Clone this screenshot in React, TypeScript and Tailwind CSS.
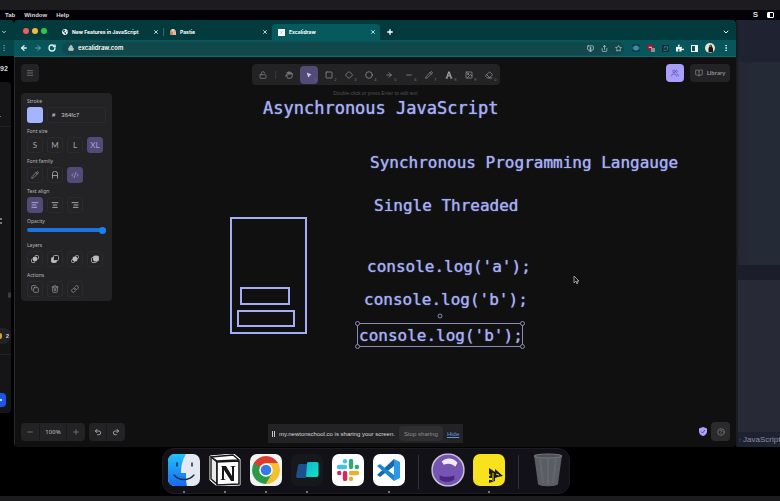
import React from "react";
import {
  AlignCenter, AlignLeft, AlignRight, ArrowLeft, ArrowRight, BookOpen, ChevronDown, ChevronRight, Circle, CodeXml,
  Copy, Diamond, EllipsisVertical, Eraser, Hand, HelpCircle, Image, Link, Lock, LockOpen, Menu, Minus,
  MonitorDown, MousePointer2, Pencil, Plus, Redo2, RotateCw, Share, Square, Star, Trash2, Undo2, Users, X,
} from "lucide-react";
import { FaFont, FaGlobeAmericas, FaPuzzlePiece } from "react-icons/fa";

type IconType = React.ComponentType<{ className?: string; strokeWidth?: number }>;

const sans = "font-['Liberation_Sans',Arial,sans-serif]";

function Tab({ label, icon, active, divider }: { label: string; icon: React.ReactNode; active?: boolean; divider?: boolean }) {
  return (
    <div
      className={
        "flex h-4 max-w-[108px] flex-1 items-center gap-1 pl-1.5 pr-1 text-white " +
        (active ? "rounded-t bg-[#06595d]" : "")
      }
    >
      {icon}
      <span className="flex-1 whitespace-nowrap font-['Inter',sans-serif] text-[5px] font-bold leading-[8px]">{label}</span>
      <button aria-label={"Close " + label}><X className="size-1.5" strokeWidth={3} /></button>
      {divider && <span className="-mr-1 h-2 w-px bg-[#3c6668]" />}
    </div>
  );
}

function TabStrip() {
  return (
    <div className="flex h-5 items-end bg-[#023a3d]">
      <div className="mr-[9px] flex h-[18px] items-center gap-[3px] pl-[9px]">
        <span className="size-1.5 rounded-full bg-[#f25d55]" />
        <span className="size-1.5 rounded-full bg-[#f6b93d]" />
        <span className="size-1.5 rounded-full bg-[#30c748]" />
      </div>
      <Tab label="New Features in JavaScript" icon={<FaGlobeAmericas className="size-1.5" />} divider />
      <Tab
        label="Pastie"
        icon={
          <svg viewBox="0 0 12 12" className="size-1.5">
            <rect x="0" y="2" width="12" height="10" rx="2" fill="#c98c5c" />
            <rect x="3" y="0" width="6" height="5" fill="#e9d9c6" />
            <rect x="6" y="5" width="6" height="7" fill="#e8b7a4" />
          </svg>
        }
      />
      <Tab
        active
        label="Excalidraw"
        icon={
          <svg viewBox="0 0 12 12" className="size-[7px]">
            <rect width="12" height="12" fill="#fff" />
            <path d="M4 9 8 3M4 3l4 6" stroke="#b9b2c9" strokeWidth="1.2" />
          </svg>
        }
      />
      <button aria-label="New tab" className="mb-1 ml-1.5 text-white"><Plus className="size-2" strokeWidth={4} /></button>
      <button aria-label="Search tabs" className="mb-1 ml-auto mr-1.5 text-white"><ChevronDown className="size-2" strokeWidth={3} /></button>
    </div>
  );
}

function AddressBar() {
  return (
    <div className="flex h-[17px] items-center border-b border-[#0d6a6e] bg-[#06565b] px-1.5 text-[#dcebeb]">
      <div className="flex items-center gap-1.5">
        <button aria-label="Back"><ArrowLeft className="size-2" strokeWidth={4} /></button>
        <button aria-label="Forward" className="text-[#6fa0a2]"><ArrowRight className="size-2" strokeWidth={3} /></button>
        <button aria-label="Reload"><RotateCw className="size-2" strokeWidth={4} /></button>
      </div>
      <div className="ml-1.5 flex h-[13px] flex-1 items-center gap-1 rounded-full bg-[#11484b] pl-1.5 pr-0.5">
        <Lock className="size-1.5 fill-current text-[#b5c6c7]" strokeWidth={3} />
        <input
          aria-label="Address"
          defaultValue="excalidraw.com"
          className="min-w-0 flex-1 bg-transparent font-['Inter',sans-serif] text-[6px] font-semibold leading-[8px] text-white outline-none"
        />
        <div className="flex gap-[7px]">
          <button aria-label="Install"><MonitorDown className="size-[7px]" strokeWidth={2} /></button>
          <button aria-label="Share"><Share className="size-[7px]" strokeWidth={2} /></button>
          <button aria-label="Bookmark"><Star className="size-[7px]" strokeWidth={2} /></button>
        </div>
      </div>
      <div className="ml-2 flex items-center gap-[7px]">
        <svg viewBox="0 0 16 16" className="size-2">
          <rect width="16" height="16" rx="3" fill="#173b47" />
          <ellipse cx="8" cy="8" rx="7" ry="3" fill="none" stroke="#2f7593" strokeWidth="2" />
          <circle cx="8" cy="8" r="5" fill="#3b8fae" />
        </svg>
        <svg viewBox="0 0 18 18" className="size-2">
          <path d="M1 2l6-2 7 2v6c0 4-3 6-7 8-4-2-6-4-6-8z" fill="#a3142b" />
          <path d="M4 6h7v3H4z" fill="#e7b6bd" />
          <rect x="9" y="9" width="9" height="9" fill="#8f8f94" />
        </svg>
        <svg viewBox="0 0 16 16" className="size-[7px]">
          <rect width="16" height="16" rx="3" fill="#112a35" />
          <path d="M3 12h7a3 3 0 0 0 3-3V4H5v4" fill="none" stroke="#54818a" strokeWidth="2" />
        </svg>
        <FaPuzzlePiece className="size-2 text-white" />
        <svg viewBox="0 0 14 14" className="size-[7px]">
          <rect x="1" y="1" width="12" height="12" fill="none" stroke="#fff" strokeWidth="2" />
          <rect x="8" y="1" width="5" height="12" fill="#fff" />
        </svg>
        <svg viewBox="0 0 20 20" className="size-2.5">
          <circle cx="10" cy="10" r="10" fill="#e9e0cf" />
          <path d="M7 19V10l2-3c-1-4 5-5 5 0l2 4v7z" fill="#191715" />
          <circle cx="11" cy="6" r="2" fill="#8d6248" />
        </svg>
        <button aria-label="Browser menu"><EllipsisVertical className="size-2" strokeWidth={3} /></button>
      </div>
    </div>
  );
}

const tools: { name: string; Icon: IconType; key?: string; active?: boolean }[] = [
  { name: "Hand", Icon: Hand },
  { name: "Selection", Icon: MousePointer2, key: "1", active: true },
  { name: "Rectangle", Icon: Square, key: "2" },
  { name: "Diamond", Icon: Diamond, key: "3" },
  { name: "Ellipse", Icon: Circle, key: "4" },
  { name: "Arrow", Icon: ArrowRight, key: "5" },
  { name: "Line", Icon: Minus, key: "6" },
  { name: "Draw", Icon: Pencil, key: "7" },
  { name: "Text", Icon: FaFont, key: "8" },
  { name: "Insert image", Icon: Image, key: "9" },
  { name: "Eraser", Icon: Eraser, key: "0" },
];

function Toolbar() {
  return (
    <div className="flex h-[21px] items-center gap-0.5 rounded bg-[#232325] px-0.5">
      <button aria-label="Keep tool active" className="flex size-[18px] items-center justify-center text-[#8c8c8c]">
        <LockOpen className="size-2" strokeWidth={2} />
      </button>
      <span className="mx-px mr-0.5 h-2 w-px bg-[#38383a]" />
      {tools.map(({ name, Icon, key, active }) => (
        <button
          key={name}
          aria-label={name}
          className={
            "relative flex size-[18px] items-center justify-center rounded " +
            (active ? "bg-[#524b78] text-[#d5cfff]" : "text-[#a2a2a4]")
          }
        >
          <Icon className={active ? "size-1.5 fill-current" : "size-2"} strokeWidth={2} />
          {key && <span className={"absolute bottom-0.5 right-px text-[4px] leading-[4px] text-[#77777a] " + sans}>{key}</span>}
        </button>
      ))}
    </div>
  );
}

function Choice({ label, active, children }: { label: string; active?: boolean; children: React.ReactNode }) {
  return (
    <button
      aria-label={label}
      className={
        "flex size-4 items-center justify-center rounded-[3px] border font-['Lato',sans-serif] text-[8px] leading-[8px] " +
        (active ? "border-[#524b78] bg-[#524b78] text-[#aaa2d6]" : "border-[#2b2b2e] text-[#a5a5a8]")
      }
    >
      {children}
    </button>
  );
}

function Section({ title, children }: { title: string; children: React.ReactNode }) {
  return (
    <div className="flex flex-col gap-0.5">
      <span className="font-['Noto_Sans',sans-serif] text-[5px] leading-[8px] text-[#b8b8bc]">{title}</span>
      <div className="flex gap-1">{children}</div>
    </div>
  );
}

function LayerIcon({ kind }: { kind: "back" | "backward" | "forward" | "front" }) {
  return (
    <svg viewBox="0 0 16 16" className="size-2" fill="none" stroke="#bdbdc0" strokeWidth="1.6">
      {kind === "back" && (<><rect x="1" y="8" width="7" height="7" rx="2" /><rect x="8" y="1" width="7" height="7" rx="2" /><rect x="5" y="5" width="6" height="6" fill="#bdbdc0" /></>)}
      {kind === "backward" && (<><rect x="1" y="5" width="10" height="10" rx="2" fill="#bdbdc0" /><rect x="5" y="1" width="10" height="10" rx="2" fill="#202022" /></>)}
      {kind === "forward" && (<><rect x="1" y="9" width="6" height="6" rx="2" /><rect x="9" y="1" width="6" height="6" rx="2" /><rect x="4" y="4" width="8" height="8" rx="2" fill="#bdbdc0" /></>)}
      {kind === "front" && (<><rect x="1" y="5" width="10" height="10" rx="2" /><rect x="5" y="2" width="10" height="10" rx="2" fill="#bdbdc0" /></>)}
    </svg>
  );
}

function PropertiesPanel() {
  return (
    <aside className="flex w-[91px] flex-col gap-1 rounded bg-[#232325] px-1.5 py-1">
      <Section title="Stroke">
        <button aria-label="Stroke colour" className="size-4 shrink-0 rounded-[3px] bg-[#a5b4ff]" />
        <label className="flex h-4 min-w-0 flex-1 items-center gap-1.5 rounded-[3px] border border-[#2b2b2e] pl-1 font-['Liberation_Sans',Arial,sans-serif] text-[6px] leading-[8px] text-[#c9c9cc]">
          <b>#</b>
          <input aria-label="Stroke hex value" defaultValue="364fc7" className="min-w-0 flex-1 bg-transparent outline-none" />
        </label>
      </Section>
      <Section title="Font size">
        <Choice label="Small">S</Choice>
        <Choice label="Medium">M</Choice>
        <Choice label="Large">L</Choice>
        <Choice label="Very large" active>XL</Choice>
      </Section>
      <Section title="Font family">
        <Choice label="Hand-drawn"><Pencil className="size-2" /></Choice>
        <Choice label="Normal">
          <svg viewBox="0 0 16 16" className="size-2" fill="none" stroke="currentColor" strokeWidth="1.8">
            <path d="M3 15V5a4 4 0 0 1 4-4h2a4 4 0 0 1 4 4v10M3 9h10" />
          </svg>
        </Choice>
        <Choice label="Code" active><CodeXml className="size-2" /></Choice>
      </Section>
      <Section title="Text align">
        <Choice label="Left" active><AlignLeft className="size-2" strokeWidth={3} /></Choice>
        <Choice label="Center"><AlignCenter className="size-2" strokeWidth={3} /></Choice>
        <Choice label="Right"><AlignRight className="size-2" strokeWidth={3} /></Choice>
      </Section>
      <label className="mb-0.5 flex flex-col font-['Noto_Sans',sans-serif] text-[5px] leading-[8px] text-[#b8b8bc]">
        Opacity
        <span className="flex h-2.5 items-center">
          <input
            type="range"
            min={0}
            max={100}
            defaultValue={100}
            className="h-1 w-full appearance-none rounded-full bg-[#1a73e0] [&::-webkit-slider-thumb]:size-[7px] [&::-webkit-slider-thumb]:appearance-none [&::-webkit-slider-thumb]:rounded-full [&::-webkit-slider-thumb]:bg-[#1e7ff0]"
          />
        </span>
      </label>
      <Section title="Layers">
        <Choice label="Send to back"><LayerIcon kind="back" /></Choice>
        <Choice label="Send backward"><LayerIcon kind="backward" /></Choice>
        <Choice label="Bring forward"><LayerIcon kind="forward" /></Choice>
        <Choice label="Bring to front"><LayerIcon kind="front" /></Choice>
      </Section>
      <Section title="Actions">
        <Choice label="Duplicate"><Copy className="size-2" /></Choice>
        <Choice label="Delete"><Trash2 className="size-2" /></Choice>
        <Choice label="Link"><Link className="size-2" /></Choice>
      </Section>
    </aside>
  );
}

const note =
  "absolute whitespace-pre font-['DejaVu_Sans_Mono','Liberation_Mono',monospace] leading-5 text-[#a3aef5] [text-shadow:0_0_1px_#a3aef5] ";

function Drawing() {
  return (
    <div className="absolute inset-0 overflow-hidden">
      <p className={note + "left-[248px] top-[41px] text-[17px]"}>Asynchronous JavaScript</p>
      <p className={note + "left-[355px] top-[96px] text-base"}>Synchronous Programming Langauge</p>
      <p className={note + "left-[359px] top-[139px] text-base"}>Single Threaded</p>
      <p className={note + "left-[352px] top-[200px] text-base"}>console.log('a');</p>
      <p className={note + "left-[349px] top-[233px] text-base"}>console.log('b');</p>
      <p className={note + "left-[344px] top-[269px] text-base"}>console.log('b');</p>
      <svg className="absolute left-[215px] top-[160px] h-[118px] w-[78px]" viewBox="0 0 78 118" fill="none" stroke="#a3aef5" strokeWidth="2">
        <rect x="1" y="1" width="75" height="115" />
        <rect x="11" y="71" width="48" height="16" />
        <rect x="8" y="94" width="56" height="15" />
      </svg>
      <svg className="absolute left-[340px] top-[255px] h-[38px] w-[170px]" viewBox="0 0 170 38" fill="#111" stroke="#8d88b5">
        <rect x="2.5" y="11.5" width="165" height="23" fill="none" />
        <circle cx="85" cy="4" r="2" />
        <circle cx="2.5" cy="11.5" r="2" />
        <circle cx="167.5" cy="11.5" r="2" />
        <circle cx="2.5" cy="34.5" r="2" />
        <circle cx="167.5" cy="34.5" r="2" />
      </svg>
      <svg className="absolute left-[558px] top-[218px] h-[10px] w-[7px]" viewBox="0 0 7 10">
        <path d="M1 1v7l2-2 1 3 1-1-1-2h2z" fill="#111" stroke="#b5b5b5" strokeWidth="0.8" />
      </svg>
    </div>
  );
}

function Canvas() {
  return (
    <main className="relative flex flex-1 flex-col border-l border-[#29292b] bg-[#101010] px-1.5 pb-1.5 pt-[7px]">
      <Drawing />
      <div className="relative grid grid-cols-[1fr_auto_1fr] items-start">
        <button aria-label="Menu" className="flex size-[18px] items-center justify-center rounded bg-[#232325] text-[#8b8b8e]">
          <Menu className="size-2" strokeWidth={2} />
        </button>
        <Toolbar />
        <div className="flex justify-end gap-1.5">
          <button aria-label="Live collaboration" className="flex size-[18px] items-center justify-center rounded bg-[#a79ffa] text-[#57509a]">
            <Users className="size-2" strokeWidth={2} />
          </button>
          <button className="flex h-[18px] w-10 items-center justify-center gap-1 rounded bg-[#232325] font-['Lato',sans-serif] text-[6px] font-bold leading-[8px] text-[#8f8f92]">
            <BookOpen className="size-2" strokeWidth={2} />
            Library
          </button>
        </div>
      </div>
      <p className={"relative mt-1 h-1 text-center text-[5px] leading-[8px] text-[#515153] " + sans}>Double-click or press Enter to edit text</p>
      <div className="relative"><PropertiesPanel /></div>
      <div className="relative mt-auto flex items-end gap-1">
        <div className="flex h-[18px] items-center rounded bg-[#232325] text-[#8b8b8e]">
          <button aria-label="Zoom out" className="flex w-[18px] justify-center"><Minus className="size-2" /></button>
          <button className="h-[18px] w-7 border-x border-[#1a1a1c] font-['Noto_Sans',sans-serif] text-[6px] leading-[8px] text-[#c0c0c3]">100%</button>
          <button aria-label="Zoom in" className="flex w-[18px] justify-center"><Plus className="size-2" /></button>
        </div>
        <div className="flex h-[18px] items-center rounded bg-[#232325] text-[#a0a0a3]">
          <button aria-label="Undo" className="flex h-[18px] w-[18px] items-center justify-center border-r border-[#1a1a1c]"><Undo2 className="size-2" strokeWidth={3} /></button>
          <button aria-label="Redo" className="flex w-[18px] justify-center"><Redo2 className="size-2" strokeWidth={3} /></button>
        </div>
        <div className="ml-auto flex items-center gap-1">
          <svg viewBox="0 0 16 18" className="h-[9px] w-2">
            <path d="M8 0l8 3v6c0 5-4 8-8 9-4-1-8-4-8-9V3z" fill="#a9a1fb" />
            <path d="M4 9l3 3 5-6" fill="none" stroke="#4a4380" strokeWidth="1.8" />
          </svg>
          <button aria-label="Help" className="flex size-[19px] items-center justify-center rounded bg-[#2b2b2d] text-[#88888b]">
            <HelpCircle className="size-2" strokeWidth={2} />
          </button>
        </div>
      </div>
      <div className={"absolute bottom-1 left-[253px] flex h-[19px] items-center bg-[#232325] px-1 text-[6px] leading-[8px] text-[#d8d8da] " + sans}>
        <span className="mr-1 h-1.5 w-[3px] border-x border-[#c8c8ca]" />
        <span className="whitespace-nowrap">my.newtonschool.co is sharing your screen.</span>
        <button className="ml-1 h-[15px] w-11 whitespace-nowrap rounded-sm bg-[#2e2e30] text-[#8f8f92]">Stop sharing</button>
        <a href="#hide" className="ml-1 text-[#6493d8] underline">Hide</a>
      </div>
    </main>
  );
}

function ChatWindow() {
  return (
    <div className="flex w-3.5 flex-col bg-black">
      <div className="flex h-5 items-center justify-center rounded-tr bg-[#023a3d] pr-1.5 text-white"><ChevronDown className="mt-1 size-1.5" strokeWidth={3} /></div>
      <div className="flex h-4 items-center justify-center bg-[#06464a] pr-1.5 text-[#6d9a9c]"><EllipsisVertical className="size-2" strokeWidth={2} /></div>
      <p className={"h-[26px] pt-[9px] text-[7px] font-bold leading-[8px] text-[#d8d8d8] " + sans}>92</p>
      <div className="mr-[3px] flex h-[331px] flex-col rounded-r bg-[#151518]">
        <div className="flex h-[45px] items-end border-b border-[#202024] pb-1.5 text-[#bbb]"><ChevronDown className="-ml-1 size-1.5" strokeWidth={3} /></div>
        <span className="mt-[91px] h-1.5 w-0.5 border-y-2 border-[#777]" />
        <span className="ml-auto mt-[68px] h-1.5 w-[3px] rounded bg-[#3b3b3e]" />
        <div className={"mt-[30px] flex h-4 items-center justify-between rounded-r-lg bg-[#222225] pr-0.5 text-[6px] font-bold leading-[8px] text-[#ccc] " + sans}>
          <span className="h-1.5 w-0.5 rounded-r bg-[#dba128]" />
          2
        </div>
        <div className="mt-2.5 border-t border-[#222225]" />
        <button aria-label="Send" className="mb-1.5 mt-auto flex h-[14px] w-1.5 items-center rounded-r-sm bg-[#1e55e6]"><span className="size-0.5 rounded-full bg-white" /></button>
      </div>
    </div>
  );
}

function EditorWindow() {
  return (
    <div className="flex w-11 flex-col overflow-hidden border-l-2 border-[#1b1b22] bg-[#272936]">
      <div className="h-[42px] bg-[#1f2331]" />
      <div className="h-[203px] bg-linear-to-r from-[#252532] to-[#242b37] to-40%" />
      <div className="h-[15px] bg-[#1b1d2a]" />
      <div className={"mt-auto flex h-[15px] items-center bg-[#1d2233] text-[8px] leading-[10px] text-[#8b8e9c] " + sans}>
        <ChevronRight className="size-1 shrink-0" />
        <span className="ml-px">JavaScript</span>
      </div>
    </div>
  );
}

function FinderIcon() {
  return (
    <svg viewBox="0 0 32 32" className="size-8">
      <defs>
        <linearGradient id="finder" x1="0" y1="0" x2="0" y2="1"><stop stopColor="#22c3fb" /><stop offset="1" stopColor="#1868f0" /></linearGradient>
      </defs>
      <rect width="32" height="32" rx="7" fill="#e4e8f0" />
      <path d="M18 0H7a7 7 0 0 0-7 7v18a7 7 0 0 0 7 7h12c-1-4-1-8-1-13h-5C13 11 15 5 18 0z" fill="url(#finder)" />
      <path d="M9 9v3M24 9v3" stroke="#15304f" strokeWidth="1.5" strokeLinecap="round" />
      <path d="M6 21c5 6 15 6 20 0" fill="none" stroke="#15304f" strokeWidth="1.3" strokeLinecap="round" />
    </svg>
  );
}

function NotionIcon() {
  return (
    <svg viewBox="0 0 32 32" className="size-8">
      <path d="M1 2 25 0l6 5v26l-23 1-7-6z" fill="#fff" stroke="#fff" strokeLinejoin="round" />
      <path d="M2 3l22-2 6 5-22 1z" fill="#fff" stroke="#171717" strokeWidth="1.4" strokeLinejoin="round" />
      <path d="M2 3l6 5v22l-6-5z" fill="#e9e9e9" stroke="#171717" strokeWidth="1.4" />
      <path d="M8 8l22-1v23l-22 1z" fill="#fff" stroke="#171717" strokeWidth="1.6" />
      <path d="M12 12h5l6 10v-9l-2-1h6l-2 1v14h-3l-7-11v9l2 1h-6l2-1V13z" fill="#171717" />
    </svg>
  );
}

function ChromeIcon() {
  return (
    <svg viewBox="0 0 32 32" className="size-8">
      <rect width="32" height="32" rx="7" fill="#f4f4f4" />
      <path d="M16 16 3.9 9A14 14 0 0 1 28.1 9z" fill="#dc3b2f" />
      <path d="M16 16 28.1 9A14 14 0 0 1 16 30z" fill="#f6c02c" />
      <path d="M16 16 16 30A14 14 0 0 1 3.9 9z" fill="#2c9a4b" />
      <path d="M16 9h12.1L22 19.5z" fill="#f6c02c" />
      <path d="M10 19.5 3.9 9 16 9z" fill="#dc3b2f" />
      <path d="M9.9 19.4 3.9 9l6 4z" fill="#2c9a4b" />
      <path d="M22 19.5 16 30l-6-10.500z" fill="#2c9a4b" />
      <path d="M22 19.5 16 30a14 14 0 0 0 5-1l4-8z" fill="#f6c02c" />
      <circle cx="16" cy="16" r="6.800" fill="#fff" />
      <circle cx="16" cy="16" r="5.300" fill="#3679e6" />
    </svg>
  );
}

function TerminalIcon() {
  return (
    <svg viewBox="0 0 32 32" className="size-8">
      <defs>
        <linearGradient id="term" x1="0" y1="0" x2="1" y2="1"><stop stopColor="#12b5cf" /><stop offset="1" stopColor="#12e3c4" /></linearGradient>
      </defs>
      <rect width="32" height="32" rx="7" fill="#16191c" />
      <path d="M9 10h9l-3 14H7a2 2 0 0 1-2-2l2-10a2 2 0 0 1 2-2z" fill="#1c4f8c" />
      <path d="M17 8h9a1.500 1.500 0 0 1 1.500 1.500V21a2 2 0 0 1-2 2H15l1-13a2 2 0 0 1 1-2z" fill="url(#term)" />
    </svg>
  );
}

function SlackIcon() {
  return (
    <svg viewBox="0 0 32 32" className="size-8">
      <rect width="32" height="32" rx="7" fill="#fff" />
      <g fill="none" strokeWidth="4.400" strokeLinecap="round">
        <path d="M7 13h6" stroke="#42c1ea" />
        <path d="M13 7.200v.1" stroke="#42c1ea" />
        <path d="M19 7v6" stroke="#32a87a" />
        <path d="M24.800 13h.1" stroke="#32a87a" />
        <path d="M19 19h6" stroke="#e6b035" />
        <path d="M19 24.800v.1" stroke="#e6b035" />
        <path d="M13 19v6" stroke="#d8275a" />
        <path d="M7.200 19h.1" stroke="#d8275a" />
      </g>
    </svg>
  );
}

function CodeEditorIcon() {
  return (
    <svg viewBox="0 0 32 32" className="size-8">
      <rect width="32" height="32" rx="7" fill="#fff" />
      <path d="M21 5v7L7 23l-3-2 17-16z" fill="#1467a8" />
      <path d="M4 12l3-2 14 11v6L4 12z" fill="#1c86cf" />
      <path d="M21 5l6 3v16l-6 3z" fill="#2a9ae6" />
    </svg>
  );
}

function OrbIcon() {
  return (
    <svg viewBox="0 0 32 32" className="size-8 scale-105">
      <circle cx="16" cy="16" r="16" fill="#c9c5d0" />
      <circle cx="16" cy="16" r="14.500" fill="#7654b4" />
      <path d="M10 8c4-4 11-4 15 1l-2 4c-3-3-7-4-11-2z" fill="#f1edf8" />
      <path d="M8 21c4 2 10 2 14 0l0 4c-4 3-10 3-14 0z" fill="#4b2782" />
    </svg>
  );
}

function NotesIcon() {
  return (
    <svg viewBox="0 0 32 32" className="size-8">
      <rect width="32" height="32" rx="7" fill="#f8e21d" />
      <path d="M16 14l6 4v-3l8 7-5 1-3 1v3l-6 2v-3h3v-2h-3v-2l2-1-2-1z" fill="#1b1a0d" />
      <path d="M20 19v8M23 20l3 1" stroke="#f8e21d" />
    </svg>
  );
}

function TrashIcon() {
  return (
    <svg viewBox="0 0 32 34" className="h-[34px] w-8">
      <path d="M2 2h28l-4 29c-1 3-19 3-20 0z" fill="#5a5e64" />
      <path d="M8 6l3 24M16 6v25M24 6l-3 24" stroke="#63676d" strokeWidth="2" />
      <ellipse cx="16" cy="3" rx="14" ry="2" fill="#4d5157" stroke="#74777c" />
    </svg>
  );
}

function DockItem({ name, running, children }: { name: string; running?: boolean; children: React.ReactNode }) {
  return (
    <button aria-label={name} className="flex h-[39px] flex-col items-center justify-between">
      <span className="flex h-8 items-center">{children}</span>
      {running && <span className="size-0.5 rounded-full bg-[#96969a]" />}
    </button>
  );
}

function Dock() {
  return (
    <footer className="flex justify-center bg-black pb-0.5 pr-12 pt-px">
      <div className="flex h-[46px] items-end gap-[9px] rounded-xl border border-[#1c1c22] bg-[#111117] px-[5px]">
        <DockItem name="Finder" running><FinderIcon /></DockItem>
        <DockItem name="Notion" running><NotionIcon /></DockItem>
        <DockItem name="Chrome" running><ChromeIcon /></DockItem>
        <DockItem name="Terminal" running><TerminalIcon /></DockItem>
        <DockItem name="Slack"><SlackIcon /></DockItem>
        <DockItem name="Code editor" running><CodeEditorIcon /></DockItem>
        <span className="mx-1 mb-1 h-[34px] w-px bg-[#313137]" />
        <DockItem name="Recorder"><OrbIcon /></DockItem>
        <DockItem name="Notes" running><NotesIcon /></DockItem>
        <span className="mx-1 mb-1 h-[34px] w-px bg-[#313137]" />
        <DockItem name="Trash"><TrashIcon /></DockItem>
      </div>
    </footer>
  );
}

export default function App() {
  return (
    <div className="flex min-h-screen flex-col overflow-hidden bg-black">
      <div className="h-2.5 bg-[#1c1c1e]" />
      <nav className={"flex h-2.5 items-center gap-[9px] bg-[#030105] pl-[5px] pr-1.5 text-[6px] font-bold leading-[8px] text-[#dcdcdc] " + sans}>
        <button>Tab</button>
        <button>Window</button>
        <button>Help</button>
        <span className="ml-auto text-[8px]">S</span>
        <span className="flex h-1.5 w-[7px] rounded-[1px] border border-white"><span className="w-0.5 bg-white" /></span>
      </nav>
      <div className="flex flex-1">
        <ChatWindow />
        <div className="flex min-w-0 flex-1 flex-col overflow-hidden rounded">
          <TabStrip />
          <AddressBar />
          <Canvas />
        </div>
        <EditorWindow />
      </div>
      <Dock />
      <div className="h-[5px] bg-[#1c1c1e]" />
    </div>
  );
}
